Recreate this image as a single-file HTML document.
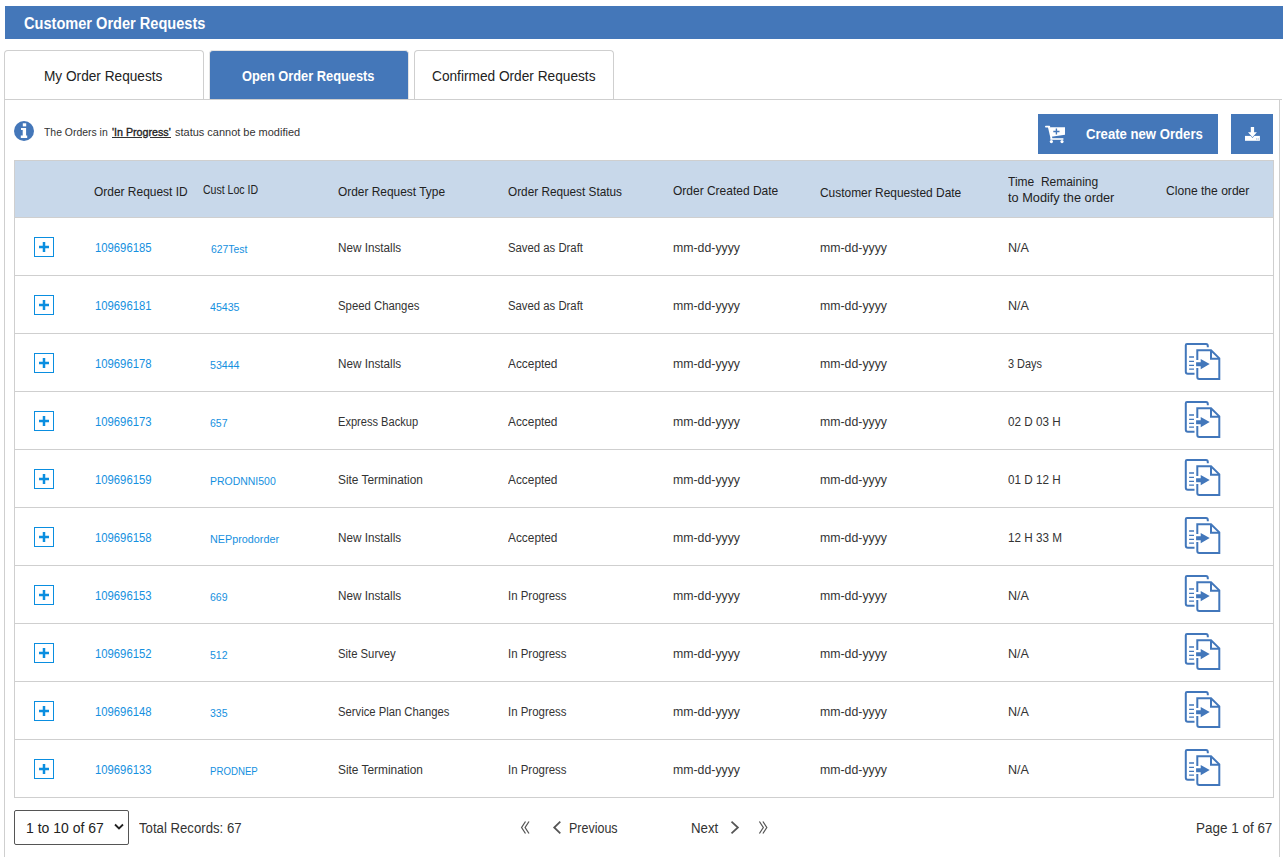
<!DOCTYPE html>
<html><head><meta charset="utf-8">
<style>
html,body{margin:0;padding:0;background:#fff;}
body{width:1287px;height:857px;overflow:hidden;position:relative;font-family:"Liberation Sans",sans-serif;}
.t{position:absolute;white-space:nowrap;line-height:1;transform-origin:0 0;}
.b{position:absolute;box-sizing:border-box;}
.hline{position:absolute;height:1px;background:#cfcfcf;}
.vline{position:absolute;width:1px;background:#cfcfcf;}
.plus2{position:absolute;left:34px;width:20px;height:20px;}
.clone{position:absolute;left:1180px;width:46px;height:46px;}
</style></head><body>
<!-- header bar -->
<div class="b" style="left:5px;top:6px;width:1278px;height:33px;background:#4477b9"></div>
<!-- tabs -->
<div class="b" style="left:4px;top:50px;width:200px;height:50px;border:1px solid #cfcfcf;border-bottom:none;border-radius:4px 4px 0 0;background:#fff"></div>
<div class="b" style="left:209px;top:50px;width:200px;height:49px;border:1px solid #e4e4e4;border-bottom:none;border-radius:4px 4px 0 0;background:#4477b9"></div>
<div class="b" style="left:414px;top:50px;width:200px;height:50px;border:1px solid #cfcfcf;border-bottom:none;border-radius:4px 4px 0 0;background:#fff"></div>
<div class="hline" style="left:4px;top:99px;width:1278px"></div>
<div class="vline" style="left:4px;top:99px;height:758px"></div>
<div class="vline" style="left:1279px;top:99px;height:758px"></div>
<!-- info -->
<svg style="position:absolute;left:14px;top:121px" width="20" height="20" viewBox="0 0 20 20">
<circle cx="10" cy="10" r="10" fill="#4477b9"/>
<rect x="8.8" y="2.3" width="3.4" height="3.1" fill="#fff"/>
<path d="M7 6.9 H12.1 V14.6 H13.2 V17 H6.8 V14.6 H8.7 V9.1 H7 Z" fill="#fff"/>
</svg>
<div style="position:absolute;left:112px;top:137px;width:30px;height:1px;background:#333"></div><div style="position:absolute;left:150px;top:137px;width:21px;height:1px;background:#333"></div>
<!-- buttons -->
<div class="b" style="left:1038px;top:114px;width:180px;height:40px;background:#4477b9"></div>
<svg style="position:absolute;left:1038px;top:114px" width="40" height="40" viewBox="0 0 40 40">
<path d="M7.9 12.6 H11.3" stroke="#fff" stroke-width="1.8" stroke-linecap="round"/>
<path d="M10.8 12.8 L13.6 25" stroke="#fff" stroke-width="1.8"/>
<path d="M11.2 13.3 H27 V20.8 L13.4 22.8 Z" fill="#fff"/>
<path d="M12.4 25 H25.4" stroke="#fff" stroke-width="1.6"/>
<circle cx="13.4" cy="27.6" r="1.6" fill="#fff"/>
<circle cx="24" cy="27.6" r="1.6" fill="#fff"/>
<path d="M15.3 17.5 H21.5 M18.4 14.5 V20.5" stroke="#4477b9" stroke-width="1.4"/>
</svg>
<div class="b" style="left:1231px;top:114px;width:42px;height:40px;background:#4477b9"></div>
<svg style="position:absolute;left:1231px;top:114px" width="42" height="40" viewBox="0 0 42 40">
<path d="M14 21.9 H28.9 V26.8 H14 Z" fill="#fff"/>
<path d="M16 17.6 H27 L21.5 23.9 Z" fill="#4477b9"/>
<path d="M19.8 13 H23.1 V18.2 H25.9 L21.5 23.3 L17 18.2 H19.8 Z" fill="#fff"/>
<path d="M25.3 25 h0.8 M26.8 25 h0.8" stroke="#4477b9" stroke-width="0.8"/>
</svg>
<!-- table -->
<div class="b" style="left:14px;top:160px;width:1260px;height:638px;border:1px solid #cfcfcf;background:#fff"></div>
<div class="b" style="left:15px;top:161px;width:1258px;height:56px;background:#c8d8ea"></div>
<div class="hline" style="left:15px;top:217px;width:1258px"></div>
<div class="hline" style="left:15px;top:275px;width:1258px"></div>
<div class="hline" style="left:15px;top:333px;width:1258px"></div>
<div class="hline" style="left:15px;top:391px;width:1258px"></div>
<div class="hline" style="left:15px;top:449px;width:1258px"></div>
<div class="hline" style="left:15px;top:507px;width:1258px"></div>
<div class="hline" style="left:15px;top:565px;width:1258px"></div>
<div class="hline" style="left:15px;top:623px;width:1258px"></div>
<div class="hline" style="left:15px;top:681px;width:1258px"></div>
<div class="hline" style="left:15px;top:739px;width:1258px"></div>
<svg class="plus2" style="top:237px" viewBox="0 0 20 20"><rect x="0.5" y="0.5" width="19" height="19" fill="none" stroke="#0a8ee0"/><path d="M5 10 H15 M10 5 V15" stroke="#0a8ee0" stroke-width="2.5"/></svg>
<svg class="plus2" style="top:295px" viewBox="0 0 20 20"><rect x="0.5" y="0.5" width="19" height="19" fill="none" stroke="#0a8ee0"/><path d="M5 10 H15 M10 5 V15" stroke="#0a8ee0" stroke-width="2.5"/></svg>
<svg class="plus2" style="top:353px" viewBox="0 0 20 20"><rect x="0.5" y="0.5" width="19" height="19" fill="none" stroke="#0a8ee0"/><path d="M5 10 H15 M10 5 V15" stroke="#0a8ee0" stroke-width="2.5"/></svg>
<svg class="plus2" style="top:411px" viewBox="0 0 20 20"><rect x="0.5" y="0.5" width="19" height="19" fill="none" stroke="#0a8ee0"/><path d="M5 10 H15 M10 5 V15" stroke="#0a8ee0" stroke-width="2.5"/></svg>
<svg class="plus2" style="top:469px" viewBox="0 0 20 20"><rect x="0.5" y="0.5" width="19" height="19" fill="none" stroke="#0a8ee0"/><path d="M5 10 H15 M10 5 V15" stroke="#0a8ee0" stroke-width="2.5"/></svg>
<svg class="plus2" style="top:527px" viewBox="0 0 20 20"><rect x="0.5" y="0.5" width="19" height="19" fill="none" stroke="#0a8ee0"/><path d="M5 10 H15 M10 5 V15" stroke="#0a8ee0" stroke-width="2.5"/></svg>
<svg class="plus2" style="top:585px" viewBox="0 0 20 20"><rect x="0.5" y="0.5" width="19" height="19" fill="none" stroke="#0a8ee0"/><path d="M5 10 H15 M10 5 V15" stroke="#0a8ee0" stroke-width="2.5"/></svg>
<svg class="plus2" style="top:643px" viewBox="0 0 20 20"><rect x="0.5" y="0.5" width="19" height="19" fill="none" stroke="#0a8ee0"/><path d="M5 10 H15 M10 5 V15" stroke="#0a8ee0" stroke-width="2.5"/></svg>
<svg class="plus2" style="top:701px" viewBox="0 0 20 20"><rect x="0.5" y="0.5" width="19" height="19" fill="none" stroke="#0a8ee0"/><path d="M5 10 H15 M10 5 V15" stroke="#0a8ee0" stroke-width="2.5"/></svg>
<svg class="plus2" style="top:759px" viewBox="0 0 20 20"><rect x="0.5" y="0.5" width="19" height="19" fill="none" stroke="#0a8ee0"/><path d="M5 10 H15 M10 5 V15" stroke="#0a8ee0" stroke-width="2.5"/></svg>
<svg class="clone" style="top:338px" viewBox="0 0 46 46"><g fill="none" stroke="#4277bb" stroke-width="2"><path d="M14.5 35.8 H7.8 Q5.8 35.8 5.8 33.8 V7.3 Q5.8 6.1 7 6.1 H26 Q27.8 6.1 27.8 8 V9.2"/><path d="M17.3 22 V12.2 H31 L39.3 20.4 V40.9 H19.3 Q17.3 40.9 17.3 38.9 V30"/><path d="M31 12.2 V20.7 H39.3"/></g><g stroke="#4277bb" stroke-width="1.35"><path d="M9.1 19 H14 M9.1 23.3 H14 M9.1 27.3 H14 M9.1 31.1 H14"/></g><path d="M16.1 24.2 H20.7 V20.9 L29.7 26.1 L20.7 31.2 V28.2 H16.1 Z" fill="#4277bb"/></svg>
<svg class="clone" style="top:396px" viewBox="0 0 46 46"><g fill="none" stroke="#4277bb" stroke-width="2"><path d="M14.5 35.8 H7.8 Q5.8 35.8 5.8 33.8 V7.3 Q5.8 6.1 7 6.1 H26 Q27.8 6.1 27.8 8 V9.2"/><path d="M17.3 22 V12.2 H31 L39.3 20.4 V40.9 H19.3 Q17.3 40.9 17.3 38.9 V30"/><path d="M31 12.2 V20.7 H39.3"/></g><g stroke="#4277bb" stroke-width="1.35"><path d="M9.1 19 H14 M9.1 23.3 H14 M9.1 27.3 H14 M9.1 31.1 H14"/></g><path d="M16.1 24.2 H20.7 V20.9 L29.7 26.1 L20.7 31.2 V28.2 H16.1 Z" fill="#4277bb"/></svg>
<svg class="clone" style="top:454px" viewBox="0 0 46 46"><g fill="none" stroke="#4277bb" stroke-width="2"><path d="M14.5 35.8 H7.8 Q5.8 35.8 5.8 33.8 V7.3 Q5.8 6.1 7 6.1 H26 Q27.8 6.1 27.8 8 V9.2"/><path d="M17.3 22 V12.2 H31 L39.3 20.4 V40.9 H19.3 Q17.3 40.9 17.3 38.9 V30"/><path d="M31 12.2 V20.7 H39.3"/></g><g stroke="#4277bb" stroke-width="1.35"><path d="M9.1 19 H14 M9.1 23.3 H14 M9.1 27.3 H14 M9.1 31.1 H14"/></g><path d="M16.1 24.2 H20.7 V20.9 L29.7 26.1 L20.7 31.2 V28.2 H16.1 Z" fill="#4277bb"/></svg>
<svg class="clone" style="top:512px" viewBox="0 0 46 46"><g fill="none" stroke="#4277bb" stroke-width="2"><path d="M14.5 35.8 H7.8 Q5.8 35.8 5.8 33.8 V7.3 Q5.8 6.1 7 6.1 H26 Q27.8 6.1 27.8 8 V9.2"/><path d="M17.3 22 V12.2 H31 L39.3 20.4 V40.9 H19.3 Q17.3 40.9 17.3 38.9 V30"/><path d="M31 12.2 V20.7 H39.3"/></g><g stroke="#4277bb" stroke-width="1.35"><path d="M9.1 19 H14 M9.1 23.3 H14 M9.1 27.3 H14 M9.1 31.1 H14"/></g><path d="M16.1 24.2 H20.7 V20.9 L29.7 26.1 L20.7 31.2 V28.2 H16.1 Z" fill="#4277bb"/></svg>
<svg class="clone" style="top:570px" viewBox="0 0 46 46"><g fill="none" stroke="#4277bb" stroke-width="2"><path d="M14.5 35.8 H7.8 Q5.8 35.8 5.8 33.8 V7.3 Q5.8 6.1 7 6.1 H26 Q27.8 6.1 27.8 8 V9.2"/><path d="M17.3 22 V12.2 H31 L39.3 20.4 V40.9 H19.3 Q17.3 40.9 17.3 38.9 V30"/><path d="M31 12.2 V20.7 H39.3"/></g><g stroke="#4277bb" stroke-width="1.35"><path d="M9.1 19 H14 M9.1 23.3 H14 M9.1 27.3 H14 M9.1 31.1 H14"/></g><path d="M16.1 24.2 H20.7 V20.9 L29.7 26.1 L20.7 31.2 V28.2 H16.1 Z" fill="#4277bb"/></svg>
<svg class="clone" style="top:628px" viewBox="0 0 46 46"><g fill="none" stroke="#4277bb" stroke-width="2"><path d="M14.5 35.8 H7.8 Q5.8 35.8 5.8 33.8 V7.3 Q5.8 6.1 7 6.1 H26 Q27.8 6.1 27.8 8 V9.2"/><path d="M17.3 22 V12.2 H31 L39.3 20.4 V40.9 H19.3 Q17.3 40.9 17.3 38.9 V30"/><path d="M31 12.2 V20.7 H39.3"/></g><g stroke="#4277bb" stroke-width="1.35"><path d="M9.1 19 H14 M9.1 23.3 H14 M9.1 27.3 H14 M9.1 31.1 H14"/></g><path d="M16.1 24.2 H20.7 V20.9 L29.7 26.1 L20.7 31.2 V28.2 H16.1 Z" fill="#4277bb"/></svg>
<svg class="clone" style="top:686px" viewBox="0 0 46 46"><g fill="none" stroke="#4277bb" stroke-width="2"><path d="M14.5 35.8 H7.8 Q5.8 35.8 5.8 33.8 V7.3 Q5.8 6.1 7 6.1 H26 Q27.8 6.1 27.8 8 V9.2"/><path d="M17.3 22 V12.2 H31 L39.3 20.4 V40.9 H19.3 Q17.3 40.9 17.3 38.9 V30"/><path d="M31 12.2 V20.7 H39.3"/></g><g stroke="#4277bb" stroke-width="1.35"><path d="M9.1 19 H14 M9.1 23.3 H14 M9.1 27.3 H14 M9.1 31.1 H14"/></g><path d="M16.1 24.2 H20.7 V20.9 L29.7 26.1 L20.7 31.2 V28.2 H16.1 Z" fill="#4277bb"/></svg>
<svg class="clone" style="top:744px" viewBox="0 0 46 46"><g fill="none" stroke="#4277bb" stroke-width="2"><path d="M14.5 35.8 H7.8 Q5.8 35.8 5.8 33.8 V7.3 Q5.8 6.1 7 6.1 H26 Q27.8 6.1 27.8 8 V9.2"/><path d="M17.3 22 V12.2 H31 L39.3 20.4 V40.9 H19.3 Q17.3 40.9 17.3 38.9 V30"/><path d="M31 12.2 V20.7 H39.3"/></g><g stroke="#4277bb" stroke-width="1.35"><path d="M9.1 19 H14 M9.1 23.3 H14 M9.1 27.3 H14 M9.1 31.1 H14"/></g><path d="M16.1 24.2 H20.7 V20.9 L29.7 26.1 L20.7 31.2 V28.2 H16.1 Z" fill="#4277bb"/></svg>
<!-- pagination -->
<div class="b" style="left:14px;top:810px;width:115px;height:35px;border:1px solid #555;border-radius:2px"></div>
<svg style="position:absolute;left:112px;top:820px" width="14" height="14" viewBox="0 0 14 14"><path d="M3 4.5 L7 8.5 L11 4.5" stroke="#222" stroke-width="1.8" fill="none"/></svg>
<svg style="position:absolute;left:515px;top:818px" width="20" height="20" viewBox="0 0 20 20"><path d="M10.5 3.5 L6.6 9.5 L10.5 15.5 M14 3.5 L10.1 9.5 L14 15.5" stroke="#555" stroke-width="1.25" fill="none"/></svg>
<svg style="position:absolute;left:547px;top:818px" width="20" height="20" viewBox="0 0 20 20"><path d="M13.3 3.6 L7.2 9.5 L13.3 15.4" stroke="#555" stroke-width="1.75" fill="none"/></svg>
<svg style="position:absolute;left:726px;top:818px" width="20" height="20" viewBox="0 0 20 20"><path d="M5.5 3.6 L11.9 9.5 L5.5 15.4" stroke="#555" stroke-width="1.75" fill="none"/></svg>
<svg style="position:absolute;left:753px;top:818px" width="20" height="20" viewBox="0 0 20 20"><path d="M6.4 3.5 L10.3 9.5 L6.4 15.5 M9.9 3.5 L13.8 9.5 L9.9 15.5" stroke="#555" stroke-width="1.25" fill="none"/></svg>
<span class="t" style="left:23.50px;top:16.00px;font-size:16px;font-weight:700;color:#fff;transform:scaleX(0.9108);">Customer Order Requests</span>
<span class="t" style="left:44.02px;top:69.00px;font-size:14px;font-weight:400;color:#222;transform:scaleX(0.9753);">My Order Requests</span>
<span class="t" style="left:241.80px;top:69.00px;font-size:14px;font-weight:700;color:#fff;transform:scaleX(0.9157);">Open Order Requests</span>
<span class="t" style="left:431.70px;top:69.00px;font-size:14px;font-weight:400;color:#222;transform:scaleX(0.9774);">Confirmed Order Requests</span>
<span class="t" style="left:44.40px;top:127.00px;font-size:11px;font-weight:400;color:#333;transform:scaleX(0.9474);">The Orders in</span>
<span class="t" style="left:112.40px;top:127.00px;font-size:11px;font-weight:400;color:#222;transform:scaleX(0.9711);-webkit-text-stroke:0.35px #222;">'In Progress'</span>
<span class="t" style="left:175.00px;top:127.00px;font-size:11px;font-weight:400;color:#333;transform:scaleX(0.9981);">status cannot be modified</span>
<span class="t" style="left:1086.00px;top:127.00px;font-size:14px;font-weight:700;color:#fff;transform:scaleX(0.9382);">Create new Orders</span>
<span class="t" style="left:93.50px;top:185.00px;font-size:13px;font-weight:400;color:#222;transform:scaleX(0.9193);">Order Request ID</span>
<span class="t" style="left:202.60px;top:184.00px;font-size:12px;font-weight:400;color:#222;transform:scaleX(0.8790);">Cust Loc ID</span>
<span class="t" style="left:337.70px;top:185.00px;font-size:13px;font-weight:400;color:#222;transform:scaleX(0.9159);">Order Request Type</span>
<span class="t" style="left:507.60px;top:185.00px;font-size:13px;font-weight:400;color:#222;transform:scaleX(0.9063);">Order Request Status</span>
<span class="t" style="left:673.00px;top:184.00px;font-size:13px;font-weight:400;color:#222;transform:scaleX(0.9216);">Order Created Date</span>
<span class="t" style="left:820.00px;top:186.00px;font-size:13px;font-weight:400;color:#222;transform:scaleX(0.9175);">Customer Requested Date</span>
<span class="t" style="left:1008.00px;top:175.00px;font-size:13px;font-weight:400;color:#222;transform:scaleX(0.9227);">Time&nbsp;&nbsp;Remaining</span>
<span class="t" style="left:1008.00px;top:191.00px;font-size:13px;font-weight:400;color:#222;transform:scaleX(0.9811);">to Modify the order</span>
<span class="t" style="left:1166.00px;top:184.00px;font-size:13px;font-weight:400;color:#222;transform:scaleX(0.9304);">Clone the order</span>
<span class="t" style="left:94.60px;top:242.00px;font-size:12px;font-weight:400;color:#1590e0;transform:scaleX(0.9405);">109696185</span>
<span class="t" style="left:210.80px;top:244.00px;font-size:11px;font-weight:400;color:#1590e0;transform:scaleX(0.9410);">627Test</span>
<span class="t" style="left:337.90px;top:242.00px;font-size:12px;font-weight:400;color:#333;transform:scaleX(0.9755);">New Installs</span>
<span class="t" style="left:508.00px;top:242.00px;font-size:12px;font-weight:400;color:#333;transform:scaleX(0.9446);">Saved as Draft</span>
<span class="t" style="left:673.00px;top:242.00px;font-size:12px;font-weight:400;color:#333;transform:scaleX(1.0255);">mm-dd-yyyy</span>
<span class="t" style="left:820.00px;top:242.00px;font-size:12px;font-weight:400;color:#333;transform:scaleX(1.0255);">mm-dd-yyyy</span>
<span class="t" style="left:1008.00px;top:242.00px;font-size:12px;font-weight:400;color:#333;transform:scaleX(1.0500);">N/A</span>
<span class="t" style="left:94.60px;top:300.00px;font-size:12px;font-weight:400;color:#1590e0;transform:scaleX(0.9405);">109696181</span>
<span class="t" style="left:209.80px;top:302.00px;font-size:11px;font-weight:400;color:#1590e0;transform:scaleX(0.9649);">45435</span>
<span class="t" style="left:337.90px;top:300.00px;font-size:12px;font-weight:400;color:#333;transform:scaleX(0.9458);">Speed Changes</span>
<span class="t" style="left:508.00px;top:300.00px;font-size:12px;font-weight:400;color:#333;transform:scaleX(0.9446);">Saved as Draft</span>
<span class="t" style="left:673.00px;top:300.00px;font-size:12px;font-weight:400;color:#333;transform:scaleX(1.0255);">mm-dd-yyyy</span>
<span class="t" style="left:820.00px;top:300.00px;font-size:12px;font-weight:400;color:#333;transform:scaleX(1.0255);">mm-dd-yyyy</span>
<span class="t" style="left:1008.00px;top:300.00px;font-size:12px;font-weight:400;color:#333;transform:scaleX(1.0500);">N/A</span>
<span class="t" style="left:94.60px;top:358.00px;font-size:12px;font-weight:400;color:#1590e0;transform:scaleX(0.9405);">109696178</span>
<span class="t" style="left:209.80px;top:360.00px;font-size:11px;font-weight:400;color:#1590e0;transform:scaleX(0.9649);">53444</span>
<span class="t" style="left:337.90px;top:358.00px;font-size:12px;font-weight:400;color:#333;transform:scaleX(0.9755);">New Installs</span>
<span class="t" style="left:508.00px;top:358.00px;font-size:12px;font-weight:400;color:#333;transform:scaleX(0.9887);">Accepted</span>
<span class="t" style="left:673.00px;top:358.00px;font-size:12px;font-weight:400;color:#333;transform:scaleX(1.0255);">mm-dd-yyyy</span>
<span class="t" style="left:820.00px;top:358.00px;font-size:12px;font-weight:400;color:#333;transform:scaleX(1.0255);">mm-dd-yyyy</span>
<span class="t" style="left:1008.00px;top:358.00px;font-size:12px;font-weight:400;color:#333;transform:scaleX(0.9104);">3 Days</span>
<span class="t" style="left:94.60px;top:416.00px;font-size:12px;font-weight:400;color:#1590e0;transform:scaleX(0.9405);">109696173</span>
<span class="t" style="left:209.80px;top:418.00px;font-size:11px;font-weight:400;color:#1590e0;transform:scaleX(0.9542);">657</span>
<span class="t" style="left:337.90px;top:416.00px;font-size:12px;font-weight:400;color:#333;transform:scaleX(0.9238);">Express Backup</span>
<span class="t" style="left:508.00px;top:416.00px;font-size:12px;font-weight:400;color:#333;transform:scaleX(0.9887);">Accepted</span>
<span class="t" style="left:673.00px;top:416.00px;font-size:12px;font-weight:400;color:#333;transform:scaleX(1.0255);">mm-dd-yyyy</span>
<span class="t" style="left:820.00px;top:416.00px;font-size:12px;font-weight:400;color:#333;transform:scaleX(1.0255);">mm-dd-yyyy</span>
<span class="t" style="left:1008.00px;top:416.00px;font-size:12px;font-weight:400;color:#333;transform:scaleX(0.9745);">02 D 03 H</span>
<span class="t" style="left:94.60px;top:474.00px;font-size:12px;font-weight:400;color:#1590e0;transform:scaleX(0.9405);">109696159</span>
<span class="t" style="left:209.80px;top:476.00px;font-size:11px;font-weight:400;color:#1590e0;transform:scaleX(0.9513);">PRODNNI500</span>
<span class="t" style="left:337.90px;top:474.00px;font-size:12px;font-weight:400;color:#333;transform:scaleX(0.9899);">Site Termination</span>
<span class="t" style="left:508.00px;top:474.00px;font-size:12px;font-weight:400;color:#333;transform:scaleX(0.9887);">Accepted</span>
<span class="t" style="left:673.00px;top:474.00px;font-size:12px;font-weight:400;color:#333;transform:scaleX(1.0255);">mm-dd-yyyy</span>
<span class="t" style="left:820.00px;top:474.00px;font-size:12px;font-weight:400;color:#333;transform:scaleX(1.0255);">mm-dd-yyyy</span>
<span class="t" style="left:1008.00px;top:474.00px;font-size:12px;font-weight:400;color:#333;transform:scaleX(0.9745);">01 D 12 H</span>
<span class="t" style="left:94.60px;top:532.00px;font-size:12px;font-weight:400;color:#1590e0;transform:scaleX(0.9405);">109696158</span>
<span class="t" style="left:209.80px;top:534.00px;font-size:11px;font-weight:400;color:#1590e0;transform:scaleX(0.9823);">NEPprodorder</span>
<span class="t" style="left:337.90px;top:532.00px;font-size:12px;font-weight:400;color:#333;transform:scaleX(0.9755);">New Installs</span>
<span class="t" style="left:508.00px;top:532.00px;font-size:12px;font-weight:400;color:#333;transform:scaleX(0.9887);">Accepted</span>
<span class="t" style="left:673.00px;top:532.00px;font-size:12px;font-weight:400;color:#333;transform:scaleX(1.0255);">mm-dd-yyyy</span>
<span class="t" style="left:820.00px;top:532.00px;font-size:12px;font-weight:400;color:#333;transform:scaleX(1.0255);">mm-dd-yyyy</span>
<span class="t" style="left:1008.00px;top:532.00px;font-size:12px;font-weight:400;color:#333;transform:scaleX(0.9754);">12 H 33 M</span>
<span class="t" style="left:94.60px;top:590.00px;font-size:12px;font-weight:400;color:#1590e0;transform:scaleX(0.9405);">109696153</span>
<span class="t" style="left:209.80px;top:592.00px;font-size:11px;font-weight:400;color:#1590e0;transform:scaleX(0.9542);">669</span>
<span class="t" style="left:337.90px;top:590.00px;font-size:12px;font-weight:400;color:#333;transform:scaleX(0.9755);">New Installs</span>
<span class="t" style="left:507.65px;top:590.00px;font-size:12px;font-weight:400;color:#333;transform:scaleX(0.9543);">In Progress</span>
<span class="t" style="left:673.00px;top:590.00px;font-size:12px;font-weight:400;color:#333;transform:scaleX(1.0255);">mm-dd-yyyy</span>
<span class="t" style="left:820.00px;top:590.00px;font-size:12px;font-weight:400;color:#333;transform:scaleX(1.0255);">mm-dd-yyyy</span>
<span class="t" style="left:1008.00px;top:590.00px;font-size:12px;font-weight:400;color:#333;transform:scaleX(1.0500);">N/A</span>
<span class="t" style="left:94.60px;top:648.00px;font-size:12px;font-weight:400;color:#1590e0;transform:scaleX(0.9405);">109696152</span>
<span class="t" style="left:209.80px;top:650.00px;font-size:11px;font-weight:400;color:#1590e0;transform:scaleX(0.9542);">512</span>
<span class="t" style="left:337.90px;top:648.00px;font-size:12px;font-weight:400;color:#333;transform:scaleX(0.9404);">Site Survey</span>
<span class="t" style="left:507.65px;top:648.00px;font-size:12px;font-weight:400;color:#333;transform:scaleX(0.9543);">In Progress</span>
<span class="t" style="left:673.00px;top:648.00px;font-size:12px;font-weight:400;color:#333;transform:scaleX(1.0255);">mm-dd-yyyy</span>
<span class="t" style="left:820.00px;top:648.00px;font-size:12px;font-weight:400;color:#333;transform:scaleX(1.0255);">mm-dd-yyyy</span>
<span class="t" style="left:1008.00px;top:648.00px;font-size:12px;font-weight:400;color:#333;transform:scaleX(1.0500);">N/A</span>
<span class="t" style="left:94.60px;top:706.00px;font-size:12px;font-weight:400;color:#1590e0;transform:scaleX(0.9405);">109696148</span>
<span class="t" style="left:209.80px;top:708.00px;font-size:11px;font-weight:400;color:#1590e0;transform:scaleX(0.9542);">335</span>
<span class="t" style="left:337.90px;top:706.00px;font-size:12px;font-weight:400;color:#333;transform:scaleX(0.9374);">Service Plan Changes</span>
<span class="t" style="left:507.65px;top:706.00px;font-size:12px;font-weight:400;color:#333;transform:scaleX(0.9543);">In Progress</span>
<span class="t" style="left:673.00px;top:706.00px;font-size:12px;font-weight:400;color:#333;transform:scaleX(1.0255);">mm-dd-yyyy</span>
<span class="t" style="left:820.00px;top:706.00px;font-size:12px;font-weight:400;color:#333;transform:scaleX(1.0255);">mm-dd-yyyy</span>
<span class="t" style="left:1008.00px;top:706.00px;font-size:12px;font-weight:400;color:#333;transform:scaleX(1.0500);">N/A</span>
<span class="t" style="left:94.60px;top:764.00px;font-size:12px;font-weight:400;color:#1590e0;transform:scaleX(0.9405);">109696133</span>
<span class="t" style="left:209.80px;top:766.00px;font-size:11px;font-weight:400;color:#1590e0;transform:scaleX(0.8786);">PRODNEP</span>
<span class="t" style="left:337.90px;top:764.00px;font-size:12px;font-weight:400;color:#333;transform:scaleX(0.9899);">Site Termination</span>
<span class="t" style="left:507.65px;top:764.00px;font-size:12px;font-weight:400;color:#333;transform:scaleX(0.9543);">In Progress</span>
<span class="t" style="left:673.00px;top:764.00px;font-size:12px;font-weight:400;color:#333;transform:scaleX(1.0255);">mm-dd-yyyy</span>
<span class="t" style="left:820.00px;top:764.00px;font-size:12px;font-weight:400;color:#333;transform:scaleX(1.0255);">mm-dd-yyyy</span>
<span class="t" style="left:1008.00px;top:764.00px;font-size:12px;font-weight:400;color:#333;transform:scaleX(1.0500);">N/A</span>
<span class="t" style="left:26.00px;top:821.00px;font-size:14px;font-weight:400;color:#222;transform:scaleX(0.9993);">1 to 10 of 67</span>
<span class="t" style="left:139.00px;top:821.00px;font-size:14px;font-weight:400;color:#333;transform:scaleX(0.9418);">Total Records: 67</span>
<span class="t" style="left:568.81px;top:821.00px;font-size:14px;font-weight:400;color:#333;transform:scaleX(0.8921);">Previous</span>
<span class="t" style="left:690.65px;top:821.00px;font-size:14px;font-weight:400;color:#333;transform:scaleX(0.9464);">Next</span>
<span class="t" style="left:1196.44px;top:821.00px;font-size:14px;font-weight:400;color:#333;transform:scaleX(0.9617);">Page 1 of 67</span>
</body></html>
